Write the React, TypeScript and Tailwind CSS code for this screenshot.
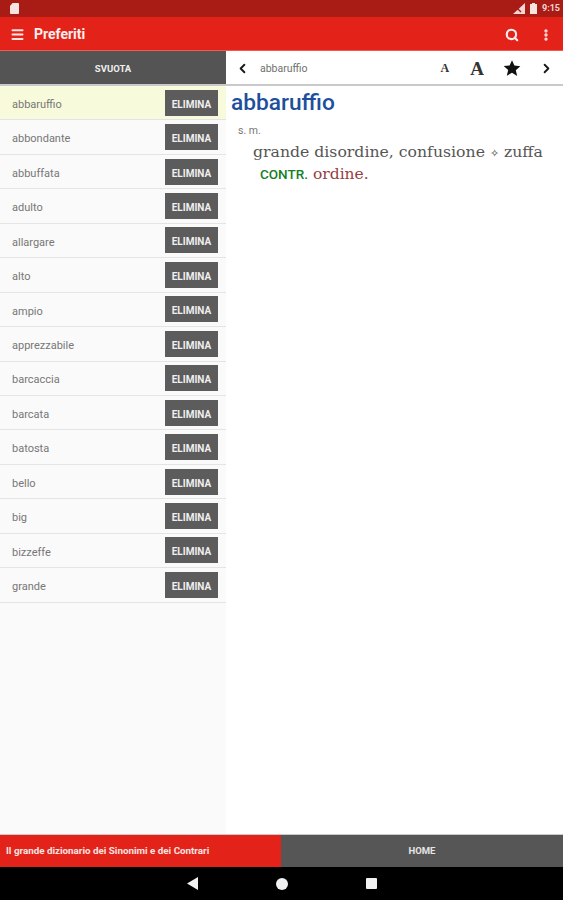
import { ChevronLeft, ChevronRight, Menu, MoreVertical, Search } from "lucide-react"

const words = [
  "abbaruffio",
  "abbondante",
  "abbuffata",
  "adulto",
  "allargare",
  "alto",
  "ampio",
  "apprezzabile",
  "barcaccia",
  "barcata",
  "batosta",
  "bello",
  "big",
  "bizzeffe",
  "grande",
]

function StatusBar() {
  return (
    <div className="flex h-[17px] shrink-0 items-center justify-between bg-[#a91b15] pl-[10px] pr-[3px]">
      <svg width="9" height="11" viewBox="0 0 9 11">
        <path d="M2.5 0H8a1 1 0 0 1 1 1v9a1 1 0 0 1-1 1H1a1 1 0 0 1-1-1V3z" fill="#f6e4e2" />
      </svg>
      <div className="flex items-center gap-[5px]">
        <svg width="12" height="11" viewBox="0 0 12 11">
          <path d="M12 0v11H0z" fill="#f3d6d3" />
          <path d="M0 1l8 8" stroke="#a91b15" strokeWidth="1.5" />
        </svg>
        <svg width="7" height="11" viewBox="0 0 7 11">
          <path d="M2 0h3v1h2v10H0V1h2z" fill="#f6e4e2" />
        </svg>
        <span className="text-[9px] leading-none font-bold text-[#f3d6d3] font-['Roboto',sans-serif]">9:15</span>
      </div>
    </div>
  )
}

function AppBar() {
  return (
    <div className="flex h-[34px] shrink-0 items-center border-b border-[#ef5a52] bg-[#e3231a] pt-[2px] pl-[10px] pr-[10px]">
      <Menu className="h-[15px] w-[15px] text-[#fbe3e1]" strokeWidth={3.2} />
      <span className="ml-[9px] text-[14px] font-bold text-[#fdeeed]">Preferiti</span>
      <Search className="ml-auto h-[14px] w-[14px] text-[#fdeeed]" strokeWidth={3.6} />
      <MoreVertical className="ml-[20px] h-[14px] w-[14px] text-[#fdeeed]" strokeWidth={3.6} />
    </div>
  )
}

function WordRow({ word, active }: { word: string; active: boolean }) {
  return (
    <div
      className={
        "flex h-[34.45px] items-center justify-between border-b border-[#e4e4e4] pl-[12px] pr-[8px] " +
        (active ? "bg-[#f7fbdc]" : "bg-[#fafafa]")
      }
    >
      <span className="pt-[5px] text-[11px] text-[#777777]">{word}</span>
      <div className="flex h-[26px] w-[53px] items-center justify-center bg-[#5c5c5c] pt-[3px] text-[10px] font-bold text-[#efefef]">
        ELIMINA
      </div>
    </div>
  )
}

function Toolbar() {
  return (
    <div className="flex h-[35px] shrink-0 items-center border-b-2 border-[#c9c9c9] bg-white pt-[1px] pl-[9px] pr-[9px]">
      <ChevronLeft className="h-[15px] w-[15px] text-[#1a1a1a]" strokeWidth={3} />
      <span className="ml-[10px] pt-[2px] text-[10.5px] text-[#6f6f6f]">abbaruffio</span>
      <span className="ml-[133px] font-['Liberation_Serif',serif] text-[12px] leading-none font-bold text-[#333]">A</span>
      <span className="ml-[21px] font-['Liberation_Serif',serif] text-[19px] leading-none font-bold text-[#333]">A</span>
      <svg className="ml-[19px]" width="18" height="18" viewBox="0 0 24 24">
        <path d="M12 1.5l3.2 7.3 7.9.8-6 5.3 1.8 7.8L12 18.3l-6.9 4.1 1.8-7.8-6-5.3 7.9-.8z" fill="#111" />
      </svg>
      <ChevronRight className="ml-[18px] h-[15px] w-[15px] text-[#1a1a1a]" strokeWidth={3} />
    </div>
  )
}

function Definition() {
  return (
    <div className="flex-1 bg-white pl-[5px] pt-[3px]">
      <div className="text-[22.7px] leading-[28px] font-medium text-[#1c4f9c]">abbaruffio</div>
      <div className="mt-[7px] ml-[7px] text-[10.5px] leading-[14px] text-[#777]">s. m.</div>
      <div className="mt-[3px] ml-[22px] font-['DejaVu_Serif',serif] text-[15.7px] leading-[22px] whitespace-nowrap text-[#555]">
        grande disordine, confusione <span className="text-[11px] text-[#333]">✧</span> zuffa
      </div>
      <div className="ml-[29px] flex items-baseline gap-[5px] leading-[18px] whitespace-nowrap">
        <span className="text-[13.5px] font-medium text-[#14801f]">CONTR.</span>
        <span className="font-['DejaVu_Serif',serif] text-[15.5px] text-[#96403f]">ordine.</span>
      </div>
    </div>
  )
}

export default function App() {
  return (
    <div className="flex h-[900px] w-[563px] flex-col overflow-hidden bg-white font-['Roboto',sans-serif]">
      <StatusBar />
      <AppBar />
      <div className="flex min-h-0 flex-1">
        <div className="flex w-[226px] shrink-0 flex-col bg-[#fafafa]">
          <div className="flex h-[35px] shrink-0 items-center justify-center border-b-2 border-[#c9c9c9] bg-[#545454] pt-[3px] text-[9.5px] font-bold text-[#eeeeee]">
            SVUOTA
          </div>
          {words.map((w, i) => (
            <WordRow key={w} word={w} active={i === 0} />
          ))}
        </div>
        <div className="flex min-w-0 flex-1 flex-col">
          <Toolbar />
          <Definition />
        </div>
      </div>
      <div className="flex h-[33px] shrink-0 border-t border-[#c9c9c9]">
        <div className="flex w-[281px] items-center bg-[#e3231a] pl-[6px] text-[9.8px] font-bold whitespace-nowrap text-[#fbe3e1]">
          Il grande dizionario dei Sinonimi e dei Contrari
        </div>
        <div className="flex flex-1 items-center justify-center bg-[#565656] text-[9.5px] font-bold text-[#e6e6e6]">
          HOME
        </div>
      </div>
      <div className="flex h-[33px] shrink-0 items-center justify-center gap-[78px] bg-black">
        <svg width="11" height="13" viewBox="0 0 11 13">
          <path d="M11 0v13L0 6.5z" fill="#f2f2f2" />
        </svg>
        <svg width="12" height="12" viewBox="0 0 12 12">
          <circle cx="6" cy="6" r="6" fill="#f2f2f2" />
        </svg>
        <svg width="11" height="11" viewBox="0 0 11 11">
          <rect width="11" height="11" rx="1" fill="#f2f2f2" />
        </svg>
      </div>
    </div>
  )
}
